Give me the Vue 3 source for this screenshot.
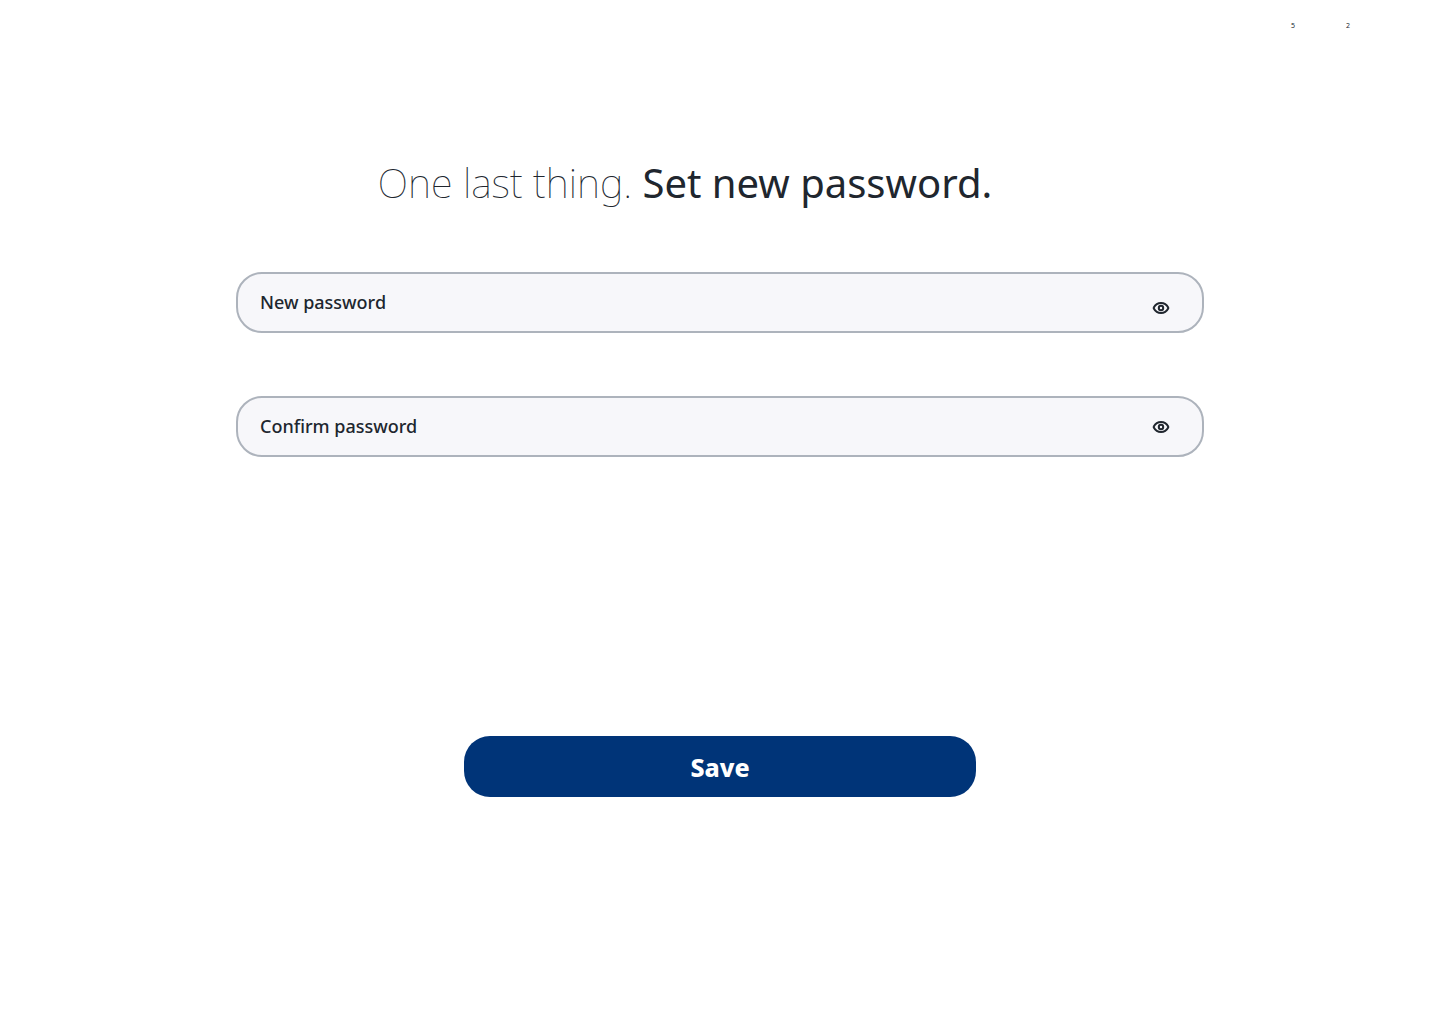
<script setup>
import { ref } from 'vue'

const fields = [
  { id: 'new-password', label: 'New password', low: true },
  { id: 'confirm-password', label: 'Confirm password', low: false },
]
const values = ref({})
const visible = ref({})
</script>

<template>
  <div class="page">
    <header class="topbar">
      <span class="count">5</span>
      <span class="count">2</span>
    </header>
    <main class="content">
      <h1 class="title"><span class="light">One last thing.</span> Set new password.</h1>
      <form class="form" @submit.prevent>
        <div v-for="f in fields" :key="f.id" class="field">
          <input
            :id="f.id"
            v-model="values[f.id]"
            class="input"
            :type="visible[f.id] ? 'text' : 'password'"
            :placeholder="f.label"
            :aria-label="f.label"
          />
          <button
            type="button"
            class="toggle"
            :class="{ low: f.low }"
            aria-label="Show password"
            @click="visible[f.id] = !visible[f.id]"
          >
            <svg width="18" height="14" viewBox="0 0 18 14" fill="none" stroke="#20262e" stroke-width="2">
              <path d="M1.800 7.500Q1.500 7 1.800 6.500C3.400 3.500 5.900 2 9 2s5.600 1.500 7.200 4.500q.3.500 0 1C14.600 10.500 12.100 12 9 12S3.400 10.500 1.800 7.500Z" stroke-linejoin="round" />
              <circle cx="9" cy="7" r="2.200" />
            </svg>
          </button>
        </div>
        <button type="submit" class="save">Save</button>
      </form>
    </main>
  </div>
</template>

<style>
body {
  margin: 0;
  background: #fff;
}
</style>

<style scoped>
.page {
  font-family: "Noto Sans", sans-serif;
  color: #20262e;
}
.topbar {
  display: flex;
  justify-content: flex-end;
  gap: 51px;
  padding: 22px 90px 0 0;
}
.count {
  font-size: 7px;
  line-height: 8px;
}
.content {
  max-width: 968px;
  margin: 0 auto;
  padding: 126px 24px 0;
}
.title {
  margin: 0 70px 62px 0;
  text-align: center;
  font-size: 40px;
  line-height: 54px;
  font-weight: 400;
}
.light {
  font-weight: 100;
}
.form {
  display: flex;
  flex-direction: column;
  align-items: center;
  gap: 63px;
}
.field {
  box-sizing: border-box;
  width: 100%;
  height: 61px;
  display: flex;
  align-items: center;
  padding: 0 32px 0 22px;
  border: 2px solid #adb3bc;
  border-radius: 26px;
  background: #f7f7fa;
}
.input {
  flex: 1;
  min-width: 0;
  padding: 0 0 2px;
  border: 0;
  outline: 0;
  background: none;
  font: 500 18px/24px "Noto Sans", sans-serif;
  color: inherit;
}
.input::placeholder {
  color: #20262e;
  opacity: 1;
}
.toggle {
  display: flex;
  padding: 0;
  border: 0;
  background: none;
  cursor: pointer;
}
.toggle.low {
  padding-top: 11px;
}
.save {
  width: 100%;
  max-width: 512px;
  height: 61px;
  margin-top: 216px;
  padding: 0;
  border: 0;
  border-radius: 26px;
  background: #003478;
  color: #fff;
  font: 800 25px/36px "Noto Sans", sans-serif;
  cursor: pointer;
}
</style>
